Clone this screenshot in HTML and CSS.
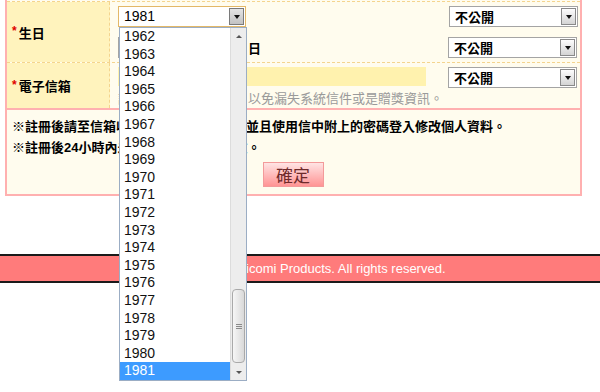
FILE: index.html
```html
<!DOCTYPE html>
<html>
<head>
<meta charset="utf-8">
<link rel="stylesheet" href="styles.css">
</head>
<body>
<div class="page">
<div class="form-box">
  <div class="row row-birth">
    <div class="label"><span class="req">*</span>生日</div>
    <div class="field">
      <div class="line">
        <div class="left">
          <div class="sel sel-year"><span class="val">1981</span><i class="arr arr-on"></i></div>
        </div>
        <div class="sel sel-priv sel-priv-first"><span class="val">不公開</span><i class="arr"></i></div>
      </div>
      <div class="line">
        <div class="left">
          <div class="sel sel-month"><span class="val">1</span><i class="arr"></i></div><span class="unit">月</span><div class="sel sel-day"><span class="val">1</span><i class="arr"></i></div><span class="unit">日</span>
        </div>
        <div class="sel sel-priv"><span class="val">不公開</span><i class="arr"></i></div>
      </div>
    </div>
  </div>
  <div class="row row-mail">
    <div class="label"><span class="req">*</span>電子信箱</div>
    <div class="field">
      <div class="line">
        <div class="left"><div class="mail-input"></div></div>
        <div class="sel sel-priv"><span class="val">不公開</span><i class="arr"></i></div>
      </div>
      <div class="hint">請務必填寫常用信箱，以免漏失系統信件或是贈獎資訊。</div>
    </div>
  </div>
  <div class="notes">
    <p class="note">※註冊後請至信箱收取系統的認證信件，並且使用信中附上的密碼登入修改個人資料。</p>
    <p class="note">※註冊後24小時內未認證帳號將自動失效。</p>
    <div class="actions"><button class="btn">確定</button></div>
  </div>
</div>

<div class="footer">Copyright © 2012 Picomi Products. All rights reserved.</div>

<div class="dropdown">
  <div class="opts">
    <div class="opt">1962</div>
    <div class="opt">1963</div>
    <div class="opt">1964</div>
    <div class="opt">1965</div>
    <div class="opt">1966</div>
    <div class="opt">1967</div>
    <div class="opt">1968</div>
    <div class="opt">1969</div>
    <div class="opt">1970</div>
    <div class="opt">1971</div>
    <div class="opt">1972</div>
    <div class="opt">1973</div>
    <div class="opt">1974</div>
    <div class="opt">1975</div>
    <div class="opt">1976</div>
    <div class="opt">1977</div>
    <div class="opt">1978</div>
    <div class="opt">1979</div>
    <div class="opt">1980</div>
    <div class="opt opt-on">1981</div>
  </div>
  <div class="sbar">
    <div class="sb-btn sb-up"></div>
    <div class="sb-track"><div class="sb-thumb"><i></i><i></i><i></i></div></div>
    <div class="sb-btn sb-down"></div>
  </div>
</div>
</div>
</body>
</html>
```

FILE: styles.css
```css
html, body {
  margin: 0;
  padding: 0;
  background: #ffffff;
}

body {
  font-family: "Liberation Sans", "Noto Sans CJK TC", sans-serif;
  font-size: 13px;
  color: #000;
}

.page {
  position: relative;
  min-height: 392px;
}

.form-box {
  margin-left: 5px;
  width: 577px;
  box-sizing: border-box;
  padding-top: 1px;
  border: 2px solid #ffb0b0;
  border-top: 0;
  background: #fffcee;
}

.row {
  display: flex;
  border-top: 1px dashed #f4d48e;
}

.label {
  width: 103px;
  flex: none;
  background: #fff3bd;
  border-right: 1px dashed #f4d48e;
  display: flex;
  align-items: center;
  padding-left: 5px;
  box-sizing: border-box;
  font-family: "Noto Sans CJK TC", sans-serif;
  font-weight: bold;
  font-size: 13px;
}

.req {
  color: #e00000;
  font-family: "Liberation Sans", sans-serif;
  font-size: 12px;
  margin-right: 2px;
  position: relative;
  top: -1px;
}

.field {
  flex: 1;
  padding: 4px 3px 4px 8px;
  display: flex;
  flex-direction: column;
  gap: 10px;
}

.row-mail .field {
  padding-bottom: 0;
  gap: 0;
}

.line {
  display: flex;
  align-items: center;
  justify-content: space-between;
}

.left {
  display: flex;
  align-items: center;
  height: 21px;
}

.sel {
  display: flex;
  align-items: center;
  height: 21px;
  box-sizing: border-box;
  border: 1px solid #a4a4a4;
  background: #fff;
  padding: 1px;
}

.sel .val {
  flex: 1;
  padding-left: 4px;
  line-height: 17px;
  white-space: nowrap;
}

.sel-year {
  width: 128px;
  border-color: #e3b868;
}

.sel-year .val {
  font-family: "Liberation Sans", sans-serif;
  font-size: 14px;
}

.sel-month {
  width: 60px;
}

.sel-day {
  width: 48px;
}

.unit {
  font-family: "Noto Sans CJK TC", sans-serif;
  font-weight: bold;
  font-size: 13px;
  margin: 0 4px;
}

.unit:last-child {
  margin: 0 0 0 1px;
}

.sel-priv {
  width: 129px;
}

.sel-priv-first {
  margin-right: -1px;
}

.sel-priv .val {
  font-family: "Noto Sans CJK TC", sans-serif;
  font-weight: bold;
}

.arr {
  flex: none;
  width: 15px;
  height: 17px;
  box-sizing: border-box;
  border: 1px solid #8a8a8a;
  background: linear-gradient(#fdfdfd, #d4d4d4);
  display: flex;
  align-items: center;
  justify-content: center;
}

.arr::after {
  content: "";
  width: 0;
  height: 0;
  border-left: 3.5px solid transparent;
  border-right: 3.5px solid transparent;
  border-top: 4px solid #111;
}

.arr-on {
  background: linear-gradient(#e4e4e4, #c2c2c2);
  border-color: #7a7a7a;
}

.mail-input {
  width: 308px;
  height: 19px;
  background: #fff2ae;
  margin-top: -2px;
}

.hint {
  font-family: "Noto Sans CJK TC", sans-serif;
  font-size: 13px;
  color: #9a9a9a;
  line-height: 20px;
  white-space: nowrap;
}

.notes {
  border-top: 2px solid #ffb0b0;
  padding: 6px 6px 7px 5px;
}

.note {
  margin: 0;
  font-family: "Liberation Sans", "Noto Sans CJK TC", sans-serif;
  font-weight: bold;
  font-size: 13px;
  line-height: 21px;
  white-space: nowrap;
}

.actions {
  display: flex;
  justify-content: center;
  margin-top: 4px;
}

.btn {
  width: 61px;
  height: 25px;
  margin: 0;
  padding: 0;
  border: 1px solid #f39a9a;
  background: linear-gradient(#ffe4e4, #ff9494);
  color: #6e2a2a;
  font-family: "Noto Sans CJK TC", sans-serif;
  font-size: 17px;
  line-height: 23px;
}

.footer {
  margin-top: 58px;
  border-top: 2px solid #1a1a1a;
  border-bottom: 2px solid #1a1a1a;
  background: #ff7b7b;
  height: 25px;
  line-height: 25px;
  padding-right: 22px;
  text-align: center;
  color: #fff;
  font-family: "Liberation Sans", sans-serif;
  font-size: 13px;
}

/* open native-looking list over the page */
.dropdown {
  position: absolute;
  left: 119px;
  top: 27px;
  width: 128px;
  height: 354px;
  box-sizing: border-box;
  border: 1px solid #9badc4;
  background: #fff;
  display: flex;
}

.opts {
  flex: 1;
}

.opt {
  height: 17.6px;
  line-height: 17.6px;
  padding-left: 4px;
  font-family: "Liberation Sans", sans-serif;
  font-size: 14px;
  color: #111;
}

.opt-on {
  background: #3d9bff;
  color: #fff;
}

.sbar {
  width: 15px;
  flex: none;
  background: #ededed;
  border-left: 1px solid #dcdcdc;
  display: flex;
  flex-direction: column;
}

.sb-btn {
  height: 16px;
  flex: none;
  display: flex;
  align-items: center;
  justify-content: center;
}

.sb-up::after {
  content: "";
  border-left: 3px solid transparent;
  border-right: 3px solid transparent;
  border-bottom: 3px solid #555;
}

.sb-down::after {
  content: "";
  border-left: 3px solid transparent;
  border-right: 3px solid transparent;
  border-top: 3px solid #555;
}

.sb-track {
  flex: 1;
  display: flex;
  flex-direction: column;
  justify-content: flex-end;
  padding: 0 1px 1px 1px;
}

.sb-thumb {
  height: 74px;
  box-sizing: border-box;
  border: 1px solid #a9a9a9;
  border-radius: 4px;
  background: linear-gradient(90deg, #f6f6f6, #d9d9d9);
  display: flex;
  flex-direction: column;
  align-items: center;
  justify-content: center;
  gap: 1px;
}

.sb-thumb i {
  display: block;
  width: 6px;
  height: 1px;
  background: #8a8a8a;
}
```
